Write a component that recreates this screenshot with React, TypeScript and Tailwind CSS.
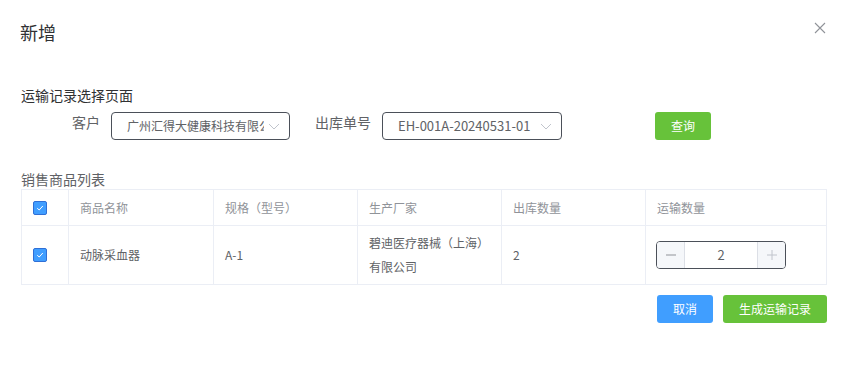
import React from "react";

const font = { fontFamily: '"Noto Sans CJK SC", "Noto Sans", sans-serif' };

function Chevron() {
  return (
    <svg width="12" height="12" viewBox="0 0 12 12" className="shrink-0">
      <path d="M1 4 L6 9 L11 4" fill="none" stroke="#c0c4cc" strokeWidth="1" />
    </svg>
  );
}

function Check() {
  return (
    <span className="flex h-[14px] w-[14px] items-center justify-center rounded-[2px] border border-[#2f6fd6] bg-[#409eff]">
      <svg width="10" height="10" viewBox="0 0 10 10">
        <path d="M2.2 5.2 L4.2 7 L7.8 3" fill="none" stroke="#fff" strokeWidth="1" />
      </svg>
    </span>
  );
}

export default function App() {
  return (
    <div className="h-[379px] w-[848px] bg-white text-[#606266]" style={font}>
      <div className="flex items-start justify-between pl-[20px] pr-[20px] pt-[20px]">
        <div className="text-[18px] leading-[24px] text-[#303133]">新增</div>
        <svg width="14" height="14" viewBox="0 0 14 14" className="mr-[1px] mt-[1px]">
          <path d="M2 2 L12 12 M12 2 L2 12" stroke="#909399" strokeWidth="1.1" />
        </svg>
      </div>

      <div className="pl-[21px] pr-[21px]">
        <div className="mt-[41px] text-[14px] leading-[20px] text-[#303133]">运输记录选择页面</div>

        <div className="mt-[7px] flex items-start">
          <div className="ml-[51px] text-[14px] leading-[20px] text-[#606266]">客户</div>
          <div className="ml-[11px] flex h-[28px] w-[179px] items-center justify-between rounded-[4px] border border-[#4b5059] pl-[15px] pr-[9px]">
            <span className="overflow-hidden whitespace-nowrap text-[12px] text-[#606266]">广州汇得大健康科技有限公司</span>
            <span className="ml-[4px]"><Chevron /></span>
          </div>
          <div className="ml-[25px] text-[14px] leading-[20px] text-[#606266]">出库单号</div>
          <div className="ml-[11px] flex h-[28px] w-[180px] items-center justify-between rounded-[4px] border border-[#4b5059] pl-[15px] pr-[9px]">
            <span className="whitespace-nowrap text-[13px] text-[#606266]">EH-001A-20240531-01</span>
            <Chevron />
          </div>
          <button className="ml-[93px] h-[28px] w-[56px] rounded-[3px] bg-[#67c23a] text-[12px] text-white">查询</button>
        </div>

        <div className="mt-[29px] text-[14px] leading-[20px] text-[#606266]">销售商品列表</div>

        <div className="w-[806px] border border-[#ebeef5] text-[12px]">
          <div className="flex h-[36px] border-b border-[#ebeef5] text-[#909399]">
            <div className="flex w-[47px] items-center border-r border-[#ebeef5] pl-[11px]"><Check /></div>
            <div className="flex w-[145px] items-center border-r border-[#ebeef5] pl-[11px]">商品名称</div>
            <div className="flex w-[144px] items-center border-r border-[#ebeef5] pl-[11px]">规格（型号）</div>
            <div className="flex w-[144px] items-center border-r border-[#ebeef5] pl-[11px]">生产厂家</div>
            <div className="flex w-[144px] items-center border-r border-[#ebeef5] pl-[11px]">出库数量</div>
            <div className="flex flex-1 items-center pl-[11px]">运输数量</div>
          </div>
          <div className="flex h-[58px] text-[#606266]">
            <div className="flex w-[47px] items-center border-r border-[#ebeef5] pl-[11px]"><Check /></div>
            <div className="flex w-[145px] items-center border-r border-[#ebeef5] pl-[11px]">动脉采血器</div>
            <div className="flex w-[144px] items-center border-r border-[#ebeef5] pl-[11px]">A-1</div>
            <div className="flex w-[144px] items-center border-r border-[#ebeef5] pl-[11px] pr-[10px] leading-[24px]">碧迪医疗器械（上海）有限公司</div>
            <div className="flex w-[144px] items-center border-r border-[#ebeef5] pl-[11px]">2</div>
            <div className="flex flex-1 items-center pl-[10px]">
              <div className="flex h-[28px] w-[130px] overflow-hidden rounded-[4px] border border-[#4b5059]">
                <div className="flex w-[28px] items-center justify-center border-r border-[#dcdfe6] bg-[#f5f7fa]">
                  <svg width="12" height="12" viewBox="0 0 12 12"><path d="M1 6 H11" stroke="#909399" strokeWidth="1" /></svg>
                </div>
                <div className="flex flex-1 items-center justify-center text-[13px] text-[#606266]">2</div>
                <div className="flex w-[28px] items-center justify-center border-l border-[#dcdfe6] bg-[#f5f7fa]">
                  <svg width="12" height="12" viewBox="0 0 12 12"><path d="M1 6 H11 M6 1 V11" stroke="#c0c4cc" strokeWidth="1" /></svg>
                </div>
              </div>
            </div>
          </div>
        </div>

        <div className="mt-[10px] flex w-[806px] justify-end gap-[10px]">
          <button className="h-[28px] w-[56px] rounded-[3px] bg-[#409eff] text-[12px] text-white">取消</button>
          <button className="h-[28px] w-[104px] rounded-[3px] bg-[#67c23a] text-[12px] text-white">生成运输记录</button>
        </div>
      </div>
    </div>
  );
}
